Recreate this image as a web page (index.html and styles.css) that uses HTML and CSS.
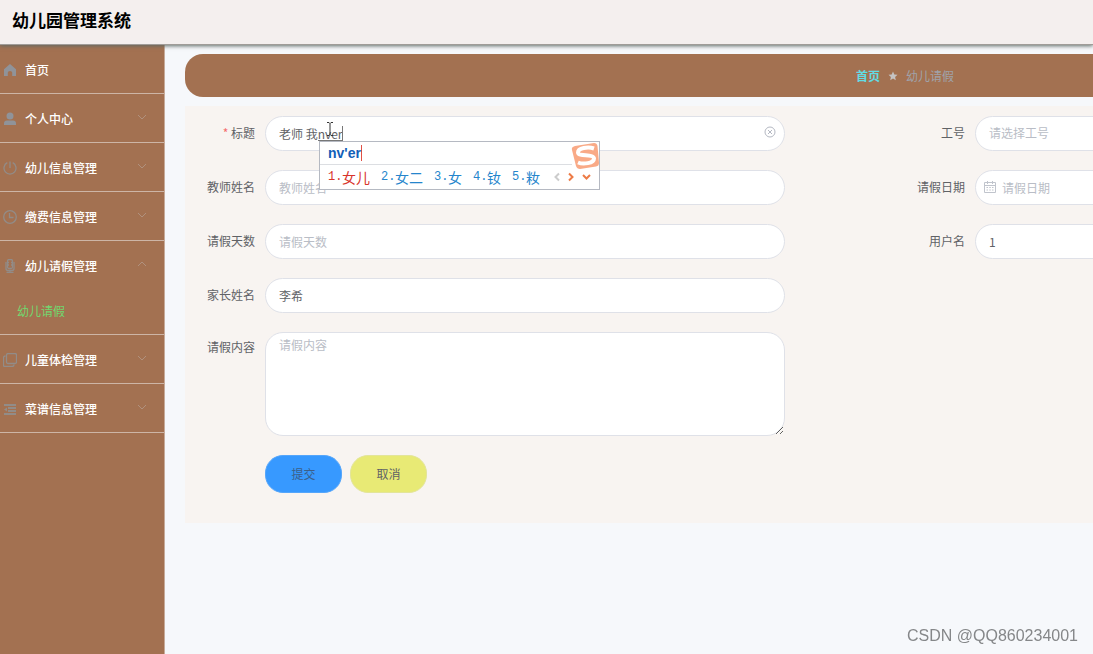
FILE: index.html
```html
<!DOCTYPE html>
<html lang="zh-CN">
<head>
<meta charset="utf-8">
<title>幼儿园管理系统</title>
<link rel="stylesheet" href="styles.css">
</head>
<body>
<header class="topbar"><h1 class="brand">幼儿园管理系统</h1></header>
<div class="layout">
  <nav class="sidebar">
    <div class="menu-group">
      <button class="menu-item" type="button">
        <svg class="menu-icon" viewBox="0 0 14 14"><path fill="currentColor" d="M7 1 13 6.200V13H9.200V9.500Q9.200 8 7 8T4.800 9.500V13H1V6.200Z"/></svg>
        <span>首页</span>
      </button>
    </div>
    <div class="menu-group">
      <button class="menu-item" type="button">
        <svg class="menu-icon" viewBox="0 0 14 14"><circle cx="7" cy="4" r="3.500" fill="currentColor"/><path fill="currentColor" d="M1 13V11.500Q1 8.500 4 8.500H10Q13 8.500 13 11.500V13Z"/></svg>
        <span>个人中心</span>
        <svg class="arrow" viewBox="0 0 8 8"><path d="M0 2 4 6 8 2"/></svg>
      </button>
    </div>
    <div class="menu-group">
      <button class="menu-item" type="button">
        <svg class="menu-icon line" viewBox="0 0 14 14"><path d="M7 .5V7M4.300 1.700A6 6 0 1 0 9.700 1.700"/></svg>
        <span>幼儿信息管理</span>
        <svg class="arrow" viewBox="0 0 8 8"><path d="M0 2 4 6 8 2"/></svg>
      </button>
    </div>
    <div class="menu-group">
      <button class="menu-item" type="button">
        <svg class="menu-icon line" viewBox="0 0 14 14"><circle cx="7" cy="7" r="6.300"/><path d="M6.500 3V7.500H10.500"/></svg>
        <span>缴费信息管理</span>
        <svg class="arrow" viewBox="0 0 8 8"><path d="M0 2 4 6 8 2"/></svg>
      </button>
    </div>
    <div class="menu-group">
      <button class="menu-item" type="button">
        <svg class="menu-icon line" viewBox="0 0 14 14"><rect x="4.500" y=".5" width="5" height="9" rx="1.500"/><path d="M3 3V9.500Q3 11.500 5 11.500H9Q11 11.500 11 9.500V3M7 11.500V13.500M3.500 13.500H10.500M4.500 3.500H6M8 3.500H9.500M4.500 6H6M8 6H9.500"/></svg>
        <span>幼儿请假管理</span>
        <svg class="arrow" viewBox="0 0 8 8"><path d="M0 6 4 2 8 6"/></svg>
      </button>
      <a class="submenu-item" href="#">幼儿请假</a>
    </div>
    <div class="menu-group">
      <button class="menu-item" type="button">
        <svg class="menu-icon line" viewBox="0 0 14 14"><rect x="3.500" y=".5" width="10" height="10" rx="1.500"/><path d="M2.500 3Q.5 3 .5 5V12Q.5 13.500 2 13.500H9Q11 13.500 11 11.500"/></svg>
        <span>儿童体检管理</span>
        <svg class="arrow" viewBox="0 0 8 8"><path d="M0 2 4 6 8 2"/></svg>
      </button>
    </div>
    <div class="menu-group">
      <button class="menu-item" type="button">
        <svg class="menu-icon dim" viewBox="0 0 14 14"><path fill="currentColor" d="M1 2H13V4H1ZM5 5H13V7H5ZM5 8H13V10H5ZM1 11H13V13H1ZM1 7.500 4 5.500V9.500Z"/></svg>
        <span>菜谱信息管理</span>
        <svg class="arrow" viewBox="0 0 8 8"><path d="M0 2 4 6 8 2"/></svg>
      </button>
    </div>
  </nav>
  <main class="content">
    <div class="board">
      <nav class="breadcrumb">
        <a class="crumb-home" href="#">首页</a>
        <svg class="star" viewBox="0 0 10 10"><path d="M5 .5 6.300 3.500 9.500 3.800 7.100 6 7.800 9.200 5 7.500 2.200 9.200 2.900 6 .5 3.800 3.700 3.500Z"/></svg>
        <span>幼儿请假</span>
      </nav>
      <form class="panel">
        <div class="fields">
          <div class="field">
            <label for="title"><span class="required">*</span> 标题</label>
            <div class="control">
              <input id="title" type="text" value="老师 我nver">
              <button class="clear" type="button" aria-label="清空"><svg viewBox="0 0 12 12"><circle cx="6" cy="6" r="5"/><path d="M4 4 8 8M8 4 4 8"/></svg></button>
              <span class="composing"></span>
              <svg class="pointer" viewBox="0 0 8 14"><path d="M1 .5H3L4 1.500 5 .5H7M4 1.500V12.500M1 13.500H3L4 12.500 5 13.500H7"/></svg>
              <div class="ime">
                <div class="ime-typed"><span>nv'er</span></div>
                <div class="ime-row">
                  <span class="candidate chosen"><b>1.</b>女儿</span>
                  <span class="candidate"><b>2.</b>女二</span>
                  <span class="candidate"><b>3.</b>女</span>
                  <span class="candidate"><b>4.</b>钕</span>
                  <span class="candidate"><b>5.</b>籹</span>
                  <svg class="ime-nav" viewBox="0 0 40 10"><path class="off" d="M8 1.500 4.500 5 8 8.500"/><path d="M18 1.500 21.500 5 18 8.500M32 3 35.500 6.500 39 3"/></svg>
                </div>
                <svg class="ime-logo" viewBox="0 0 28 28"><path class="tile" d="M4 4 23 1Q26 1 26.500 4L28 21Q28 24 25 24.500L9 27Q6 27 5 24L1 8Q0 5 4 4Z"/><path class="mark" d="M23 6.500C17 4.500 7 6 7 10.500 7 15 23 11.500 23 16.500 23 21.500 12 22.500 7 20.500"/></svg>
              </div>
            </div>
          </div>
          <div class="field">
            <label for="job">工号</label>
            <div class="control"><select id="job" class="empty"><option>请选择工号</option></select></div>
          </div>
          <div class="field">
            <label for="teacher">教师姓名</label>
            <div class="control"><input id="teacher" type="text" placeholder="教师姓名"></div>
          </div>
          <div class="field">
            <label for="date">请假日期</label>
            <div class="control">
              <input id="date" class="with-icon" type="text" placeholder="请假日期">
              <svg class="calendar" viewBox="0 0 12 12"><path d="M.5 1.500H11.500V11.500H.5ZM.5 4.500H11.500M3.500 0V3M8.500 0V3M2.500 6.500H4M5.300 6.500H6.800M8 6.500H9.500M2.500 9H4M5.300 9H6.800M8 9H9.500"/></svg>
            </div>
          </div>
          <div class="field">
            <label for="days">请假天数</label>
            <div class="control"><input id="days" type="text" placeholder="请假天数"></div>
          </div>
          <div class="field">
            <label for="user">用户名</label>
            <div class="control"><input id="user" type="text" value="1"></div>
          </div>
          <div class="field wide">
            <label for="parent">家长姓名</label>
            <div class="control"><input id="parent" type="text" value="李希"></div>
          </div>
          <div class="field wide multiline">
            <label for="reason">请假内容</label>
            <div class="control"><textarea id="reason" placeholder="请假内容"></textarea></div>
          </div>
        </div>
        <div class="actions">
          <button class="btn submit" type="button">提交</button>
          <button class="btn cancel" type="button">取消</button>
        </div>
      </form>
    </div>
  </main>
</div>
<div class="watermark">CSDN @QQ860234001</div>
</body>
</html>
```

FILE: styles.css
```css
* { box-sizing: border-box; }
body {
  margin: 0;
  min-height: 100vh;
  display: flex;
  flex-direction: column;
  overflow: hidden;
  background: #f6f8fb;
  color: #606266;
  font: 12px/20px "Noto Sans CJK SC", sans-serif;
}
button, input, select, textarea { font: inherit; color: inherit; }
a { text-decoration: none; }
svg { flex: none; fill: none; }

.topbar {
  position: relative;
  z-index: 1;
  padding: 7px 12px 12px;
  background: #f4efee;
  border-bottom: 1px solid #a09c98;
  box-shadow: 0 1px 4px #5f6b66;
}
.brand {
  margin: 0;
  color: #000;
  font-size: 17px;
  line-height: 25px;
  font-weight: 700;
}
.layout { flex: 1; display: flex; }

.sidebar { flex: none; width: 165px; background: #a37151; border-right: 1px solid #c7ab9a; }
.menu-group { border-bottom: 1px solid #cdb5a6; }
.menu-item {
  display: flex;
  align-items: center;
  width: 100%;
  height: 48px;
  padding: 1px 18px 0 3px;
  border: 0;
  background: none;
  color: #fff;
  font-weight: 500;
  text-align: left;
}
.menu-item span { flex: 1; }
.menu-icon { width: 14px; height: 14px; margin-right: 8px; color: #909399; }
.menu-icon.line { stroke: #928c88; stroke-width: 1.3; }
.menu-icon.dim { color: #928c88; }
.arrow { width: 8px; height: 8px; margin-bottom: 4px; stroke: #b0917e; }
.submenu-item {
  display: block;
  height: 45px;
  padding: 12px 17px;
  color: #72d86f;
}

.content { flex: 1; min-width: 0; overflow: hidden; padding: 9px 20px; }
.board { min-width: 1440px; }
.breadcrumb {
  display: flex;
  align-items: center;
  justify-content: center;
  gap: 8px;
  height: 43px;
  border-radius: 18px;
  background: #a37151;
  color: #a0a3aa;
}
.crumb-home { color: #62dce4; font-weight: 700; }
.star { width: 10px; height: 10px; fill: #c5c3c3; }

.panel { margin-top: 9px; padding: 10px 10px 30px; background: #f8f4f1; }
.fields { display: grid; grid-template-columns: 1fr 1fr; row-gap: 19px; }
.field { display: flex; gap: 10px; }
.field.wide { grid-column: 1; }
.field label { flex: none; width: 60px; padding-top: 7px; text-align: right; white-space: nowrap; }
.multiline label { padding-top: 5px; }
.required { color: #f56c6c; }
.control { position: relative; flex: none; width: 520px; }
.control input, .control select, .control textarea {
  display: block;
  width: 100%;
  height: 35px;
  padding: 0 13px 1px;
  border: 1px solid #dfe1e8;
  border-radius: 18px;
  outline: 0;
  background: #fff;
}
.control select { appearance: none; }
.control .empty { color: #b9bdc6; }
.control .with-icon { padding-left: 26px; }
.control textarea { height: 104px; padding: 2px 13px; resize: vertical; }
::placeholder { color: #b9bdc6; opacity: 1; }
.calendar { position: absolute; left: 9px; top: 11px; width: 12px; height: 12px; stroke: #c0c4cc; }
.clear { position: absolute; right: 9px; top: 10px; padding: 0; border: 0; background: none; line-height: 0; }
.clear svg { width: 12px; height: 12px; stroke: #b4b8c2; }

.composing { position: absolute; left: 53px; top: 10px; width: 25px; height: 15px; border: solid #777; border-width: 0 1px 1px 0; }
.pointer { position: absolute; left: 61px; top: 6px; width: 8px; height: 14px; stroke: #333; }
.ime {
  position: absolute;
  z-index: 2;
  left: 54px;
  top: 25px;
  width: 281px;
  padding: 1px 0;
  border: 1px solid #b5b9c2;
  background: #fff;
}
.ime-typed { display: flex; height: 22px; padding: 2px 8px 3px; margin-right: 27px; border-bottom: 1px solid #dcdee2; }
.ime-typed span {
  border-right: 1px solid #e05045;
  color: #1260b8;
  font: 700 14px/16px "Liberation Sans", sans-serif;
}
.ime-row { display: flex; align-items: center; gap: 11px; height: 23px; padding-left: 8px; }
.candidate { display: flex; align-items: center; color: #2585cc; font-size: 14px; }
.candidate b { width: 14px; font: 400 12px/20px "Liberation Mono", monospace; }
.chosen { color: #d8342b; }
.ime-nav { width: 40px; height: 10px; stroke: #ed7b46; stroke-width: 2; }
.ime-nav .off { stroke: #ccc; }
.ime-logo { position: absolute; right: 0; top: 0; width: 28px; height: 28px; }
.tile { fill: #f9aa87; }
.mark { stroke: #fff; stroke-width: 4; }

.actions { display: flex; gap: 8px; margin: 19px 0 0 70px; }
.btn { width: 77px; height: 38px; padding: 0 0 1px; border: 1px solid #dcdfe6; border-radius: 18px; color: #606266; }
.submit { border-color: #55a6fb; background: #3799ff; color: #3c5f88; }
.cancel { border-color: #e3e59a; background: #e8ea75; }

.watermark {
  position: fixed;
  right: 15px;
  bottom: 8px;
  color: #858789;
  font: 16px/20px "Liberation Sans", sans-serif;
}
```
